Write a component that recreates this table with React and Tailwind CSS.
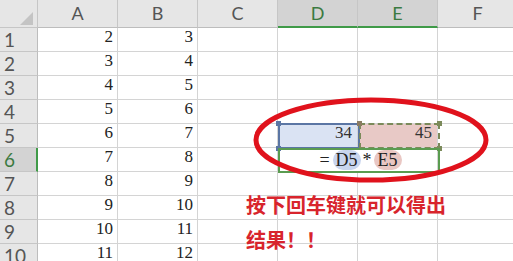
import React from "react";

const cols = ["A", "B", "C", "D", "E", "F"];
const data = [
  [2, 3], [3, 4], [4, 5], [5, 6], [6, 7], [7, 8], [8, 9], [9, 10], [10, 11], [11, 12],
];
const serif = { fontFamily: '"Liberation Serif","Noto Sans CJK SC",serif' };

export default function App() {
  return (
    <div className="relative w-[513px] h-[261px] overflow-hidden bg-white">
      <div className="grid grid-cols-[38px_80px_80px_80px_80px_80px_80px] grid-rows-[28px_repeat(10,24px)]">
        {/* header row */}
        <div className="relative bg-[#e6e6e6] border-r border-b border-[#c6c6c6]">
          <svg className="absolute left-[20px] top-[12px]" width="13" height="13" viewBox="0 0 13 13">
            <polygon points="13,0 13,13 0,13" fill="#c4c4c4" />
          </svg>
        </div>
        {cols.map((c) => {
          const sel = c === "D" || c === "E";
          return (
            <div
              key={c}
              className={
                "flex items-center justify-center border-r border-[#c6c6c6] text-[18px] font-['Lato',sans-serif] " +
                (sel
                  ? "bg-[#d3d3d3] text-[#3b7a41] border-b-2 border-b-[#3f9a48]"
                  : "bg-[#e6e6e6] text-[#555] border-b border-b-[#bdbdbd]")
              }
            >
              {c}
            </div>
          );
        })}
        {data.map((row, i) => {
          const r = i + 1;
          const sel = r === 6;
          return (
            <React.Fragment key={r}>
              <div
                className={
                  "flex items-center pl-[4px] pt-[1px] border-b border-[#c6c6c6] text-[19px] font-['Lato',sans-serif] " +
                  (sel
                    ? "bg-[#d3d3d3] text-[#3b7a41] border-r-2 border-r-[#3f9a48]"
                    : "bg-[#e6e6e6] text-[#555] border-r border-r-[#bdbdbd]")
                }
              >
                {r}
              </div>
              <div className="flex items-end justify-end pr-[4px] pb-[2px] border-r border-b border-[#d4d4d4] text-[17px] text-[#222]" style={serif}>
                {row[0]}
              </div>
              <div className="flex items-end justify-end pr-[4px] pb-[2px] border-r border-b border-[#d4d4d4] text-[17px] text-[#222]" style={serif}>
                {row[1]}
              </div>
              <div className="border-r border-b border-[#d4d4d4]" />
              {r === 5 ? (
                <>
                  <div className="flex items-end justify-end pr-[5px] pb-[2px] bg-[#dae3f3] border-r border-b border-[#d4d4d4] text-[17px] text-[#333]" style={serif}>
                    34
                  </div>
                  <div className="flex items-end justify-end pr-[5px] pb-[2px] bg-[#e8c9c6] border-r border-b border-[#d4d4d4] text-[17px] text-[#333]" style={serif}>
                    45
                  </div>
                </>
              ) : r === 6 ? (
                <div className="col-span-2 flex items-center justify-center pl-[6px] border-r border-b border-[#d4d4d4] text-[18px] leading-[20px] text-[#222]" style={serif}>
                  <span className="mr-[3px]">=</span>
                  <span className="rounded-full bg-[#c9d5ee] px-[3px]">D5</span>
                  <span className="mx-[2px]">*</span>
                  <span className="rounded-full bg-[#e9c7c3] px-[4px]">E5</span>
                </div>
              ) : (
                <>
                  <div className="border-r border-b border-[#d4d4d4]" />
                  <div className="border-r border-b border-[#d4d4d4]" />
                </>
              )}
              <div className="border-r border-b border-[#d4d4d4]" />
            </React.Fragment>
          );
        })}
      </div>

      {/* D5 reference border */}
      <div className="absolute left-[278px] top-[123px] w-[82px] h-[26px] border-2 border-[#5b76a4]" />
      <div className="absolute left-[276px] top-[121px] w-[5px] h-[5px] bg-[#5b76a4]" />
      <div className="absolute left-[276px] top-[146px] w-[5px] h-[5px] bg-[#5b76a4]" />
      {/* E5 reference border (dashed) */}
      <div className="absolute left-[359px] top-[123px] w-[81px] h-[26px] border-2 border-dashed border-[#7b8a5a]" />
      <div className="absolute left-[357px] top-[121px] w-[5px] h-[5px] bg-[#8a7b62]" />
      <div className="absolute left-[437px] top-[121px] w-[5px] h-[5px] bg-[#7b8a5a]" />
      <div className="absolute left-[437px] top-[146px] w-[5px] h-[5px] bg-[#7b8a5a]" />
      {/* active D6:E6 border */}
      <div className="absolute left-[278px] top-[148px] w-[162px] h-[25px] border-2 border-[#5a9c50]" />

      {/* red ellipse */}
      <svg className="absolute left-0 top-0" width="513" height="261" viewBox="0 0 513 261">
        <ellipse cx="371" cy="140" rx="115" ry="40" fill="none" stroke="#e0121c" strokeWidth="5" />
      </svg>

      {/* annotation */}
      <div className="absolute left-[246px] top-[187px] text-[20px] leading-[35px] font-bold text-[#d8242c] font-['Noto_Sans_CJK_SC',sans-serif]">
        <div>按下回车键就可以得出</div>
        <div>结果！！</div>
      </div>
    </div>
  );
}
